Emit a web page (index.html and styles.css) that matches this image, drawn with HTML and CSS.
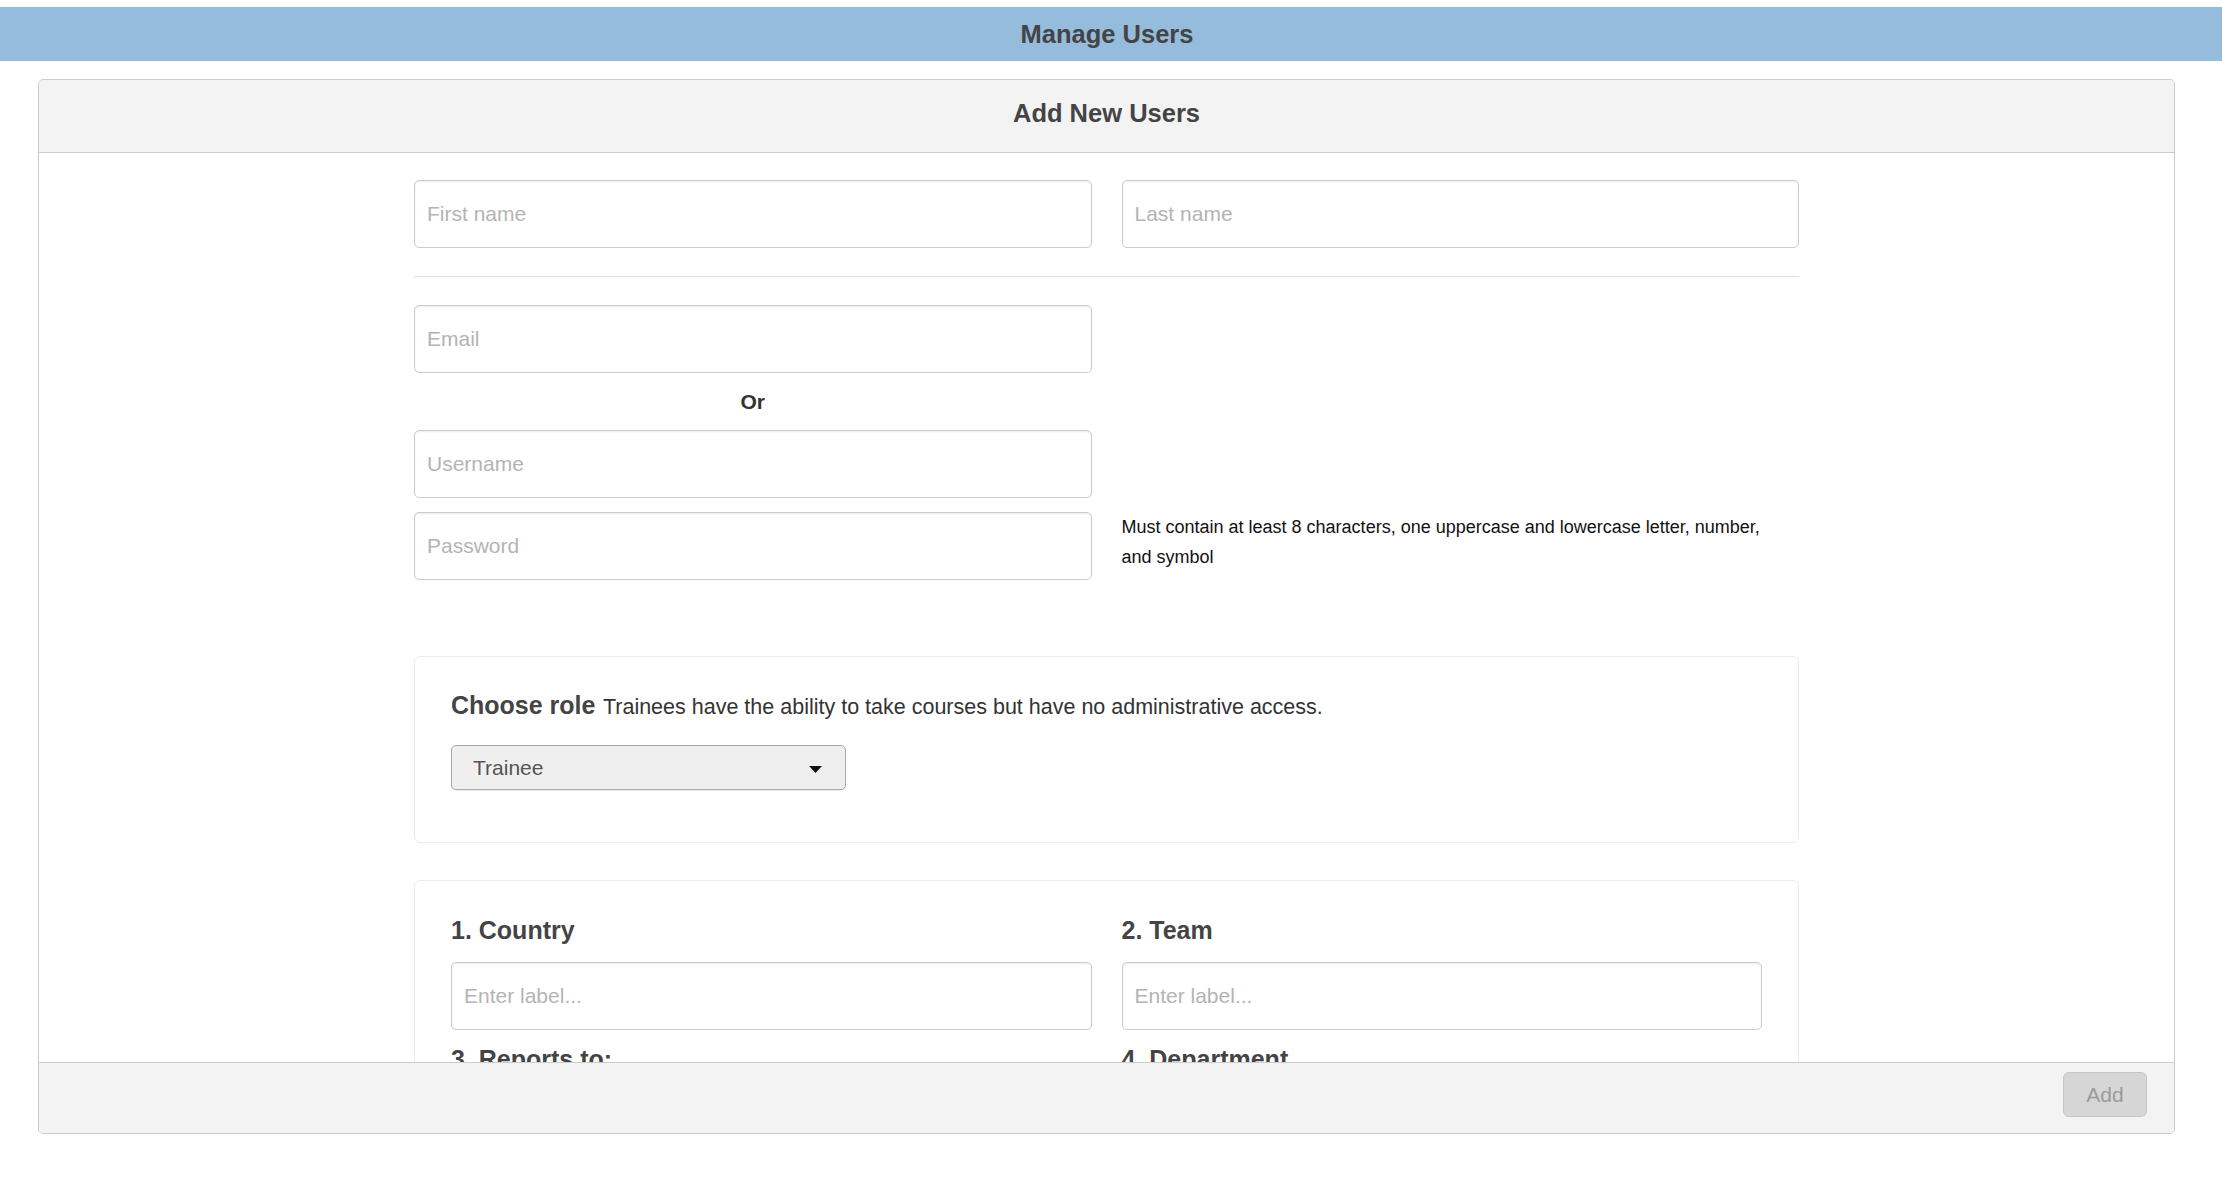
FILE: index.html
```html
<!DOCTYPE html>
<html lang="en">
<head>
    <meta charset="UTF-8">
    <meta name="viewport" content="width=device-width, initial-scale=1.0">
    <title>Manage Users</title>
    <link rel="stylesheet" href="styles.css">
</head>
<body>

<header class="topbar">Manage Users</header>

<div class="panel">
    <div class="panel-heading">Add New Users</div>

    <div class="panel-body">
        <form class="user-form">
            <div class="two-col">
                <input class="field" type="text" placeholder="First name">
                <input class="field" type="text" placeholder="Last name">
            </div>

            <hr class="divider">

            <div class="cred-grid">
                <input class="field" type="email" placeholder="Email">
                <div class="or">Or</div>
                <input class="field" type="text" placeholder="Username">
                <input class="field password" type="password" placeholder="Password">
                <p class="hint">Must contain at least 8 characters, one uppercase and lowercase letter, number, and symbol</p>
            </div>

            <div class="box role-box">
                <div class="role-line">
                    <span class="role-title">Choose role</span>
                    <span class="role-desc">Trainees have the ability to take courses but have no administrative access.</span>
                </div>
                <div class="select">
                    <span>Trainee</span>
                    <svg class="caret" width="13" height="7" viewBox="0 0 13 7"><path d="M0 0h13L6.5 7z" fill="#111"/></svg>
                </div>
            </div>

            <div class="box labels-box">
                <div class="label-col">
                    <h4 class="label-title">1. Country</h4>
                    <input class="field" type="text" placeholder="Enter label...">
                </div>
                <div class="label-col">
                    <h4 class="label-title">2. Team</h4>
                    <input class="field" type="text" placeholder="Enter label...">
                </div>
                <div class="label-col">
                    <h4 class="label-title">3. Reports to:</h4>
                    <input class="field" type="text" placeholder="Enter label...">
                </div>
                <div class="label-col">
                    <h4 class="label-title">4. Department</h4>
                    <input class="field" type="text" placeholder="Enter label...">
                </div>
            </div>
        </form>
    </div>

    <div class="panel-footer">
        <button class="btn-add" type="button" disabled>Add</button>
    </div>
</div>

</body>
</html>
```

FILE: styles.css
```css
body {
    font-family: "Liberation Sans", Helvetica, Arial, sans-serif;
    margin: 0;
    padding: 7px 0 0;
    background-color: #ffffff;
    color: #333333;
}

.topbar {
    height: 54px;
    background-color: #95bcdc;
    color: #444444;
    font-size: 25.5px;
    font-weight: bold;
    display: flex;
    align-items: center;
    justify-content: center;
    padding-right: 8px;
}

.panel {
    margin: 18px 47px 0 38px;
    height: 1055px;
    box-sizing: border-box;
    border: 1px solid #cccccc;
    border-radius: 5px;
    display: flex;
    flex-direction: column;
    overflow: hidden;
}

.panel-heading {
    height: 73px;
    box-sizing: border-box;
    flex-shrink: 0;
    padding-bottom: 5px;
    background-color: #f3f3f3;
    border-bottom: 1px solid #cccccc;
    color: #444444;
    font-size: 25.5px;
    font-weight: bold;
    display: flex;
    align-items: center;
    justify-content: center;
}

.panel-body {
    flex: 1;
    overflow: hidden;
    padding-top: 27px;
}

.user-form {
    width: 1385px;
    margin: 0 auto;
}

.two-col {
    display: grid;
    grid-template-columns: 1fr 1fr;
    column-gap: 30px;
}

.field {
    display: block;
    width: 100%;
    height: 68px;
    box-sizing: border-box;
    padding: 0 12px;
    border: 1px solid #cccccc;
    border-radius: 5px;
    box-shadow: inset 0 1px 2px rgba(0, 0, 0, 0.08);
    font-family: inherit;
    font-size: 21px;
    color: #555555;
    background-color: #ffffff;
}

.field::placeholder {
    color: #b4b4b4;
}

.divider {
    border: none;
    border-top: 1px solid #dddddd;
    margin: 28px 0 28px;
}

.cred-grid {
    display: grid;
    grid-template-columns: 1fr 1fr;
    column-gap: 30px;
}

.cred-grid > .field,
.cred-grid > .or {
    grid-column: 1;
}

.or {
    height: 57px;
    display: flex;
    align-items: center;
    justify-content: center;
    font-size: 21px;
    font-weight: bold;
    color: #333333;
}

.password {
    margin-top: 14px;
}

.hint {
    grid-column: 2;
    grid-row: 4;
    align-self: start;
    margin: 14px 0 0;
    max-width: 660px;
    font-size: 18px;
    line-height: 30px;
    color: #111111;
}

.box {
    border: 1px solid #ececec;
    border-radius: 6px;
}

.role-box {
    margin-top: 76px;
    padding: 31px 36px 52px;
}

.role-line {
    line-height: 34px;
}

.role-title {
    font-size: 25px;
    font-weight: bold;
    color: #444444;
}

.role-desc {
    font-size: 21.5px;
    color: #333333;
    margin-left: 3px;
}

.select {
    margin-top: 19px;
    width: 395px;
    height: 45px;
    box-sizing: border-box;
    padding: 0 23px 0 21px;
    background-color: #efefef;
    border: 1px solid #aaaaaa;
    border-radius: 5px;
    box-shadow: 0 1px 1px rgba(0, 0, 0, 0.08);
    display: flex;
    align-items: center;
    justify-content: space-between;
    font-size: 21px;
    color: #555555;
}

.caret {
    margin-top: 3px;
}

.labels-box {
    margin-top: 37px;
    padding: 32px 36px 40px;
    display: grid;
    grid-template-columns: 1fr 1fr;
    column-gap: 30px;
}

.label-title {
    margin: 0 0 15px;
    font-size: 25px;
    line-height: 34px;
    font-weight: bold;
    color: #444444;
}

.label-col .field {
    margin-bottom: 12px;
}

.panel-footer {
    flex-shrink: 0;
    height: 71px;
    box-sizing: border-box;
    background-color: #f3f3f3;
    border-top: 1px solid #cccccc;
    display: flex;
    justify-content: flex-end;
    align-items: flex-start;
    padding: 9px 27px 0 0;
}

.btn-add {
    width: 84px;
    height: 45px;
    background-color: #d6d6d6;
    border: 1px solid #c6c6c6;
    border-radius: 6px;
    color: #9a9a9a;
    font-family: inherit;
    font-size: 21px;
    cursor: not-allowed;
}
```
